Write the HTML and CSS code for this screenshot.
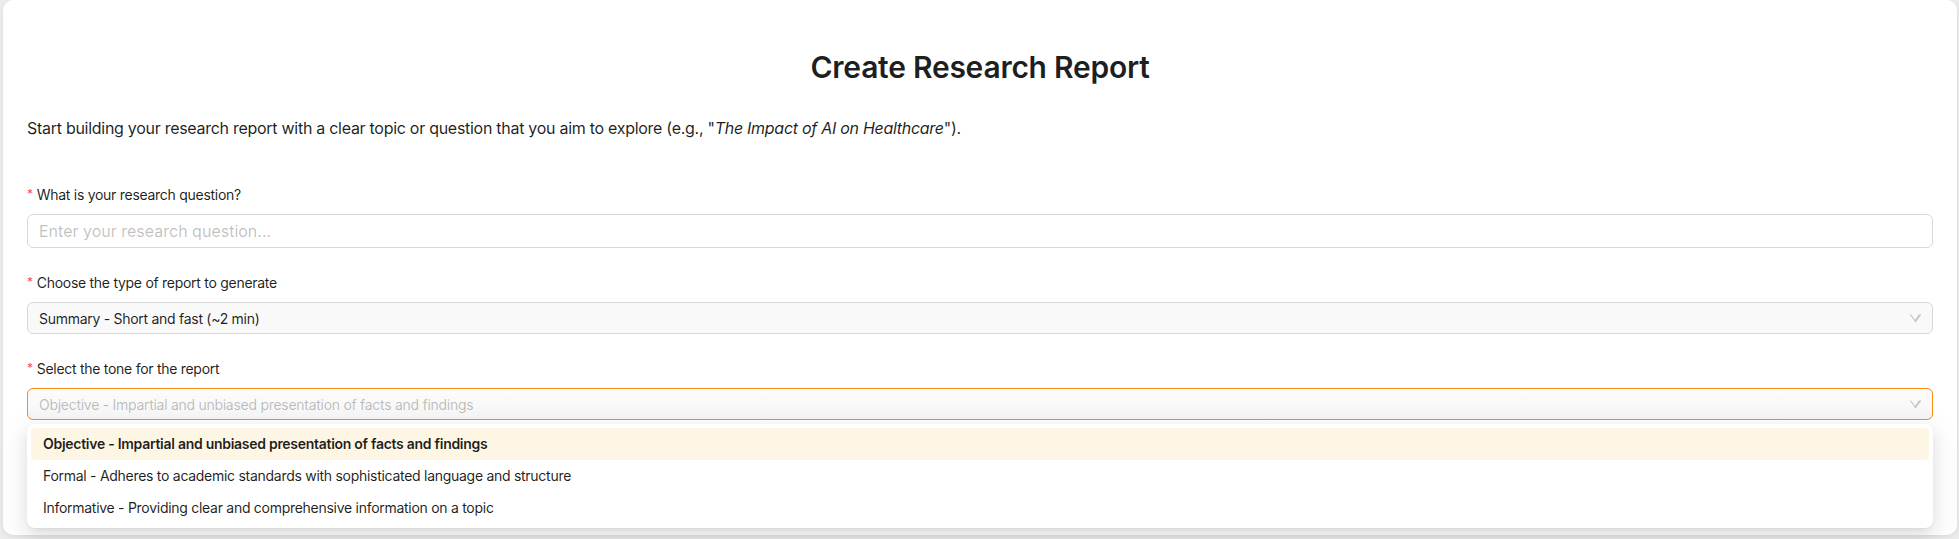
FILE: index.html
```html
<!DOCTYPE html>
<html lang="en">
<head>
<meta charset="utf-8">
<title>Create Research Report</title>
<link rel="stylesheet" href="styles.css">
</head>
<body>
<main class="card">
  <h2 class="title">Create Research Report</h2>
  <p class="intro">Start building your research report with a clear topic or question that you aim to explore (e.g., "<em>The Impact of AI on Healthcare</em>").</p>

  <form class="form">
    <div class="item">
      <label class="label"><span class="req">*</span>What is your research question?</label>
      <input class="input" type="text" placeholder="Enter your research question...">
    </div>

    <div class="item">
      <label class="label"><span class="req">*</span>Choose the type of report to generate</label>
      <div class="select">
        <span class="value">Summary - Short and fast (~2 min)</span>
        <svg class="arrow" viewBox="64 64 896 896" aria-hidden="true"><path d="M884 256h-75c-5.1 0-9.9 2.5-12.9 6.6L512 654.2 227.9 262.6c-3-4.1-7.8-6.6-12.9-6.6h-75c-6.5 0-10.3 7.4-6.5 12.1l392.2 540.2c12.6 17.4 38.9 17.4 51.4 0l392.2-540.2c3.9-4.7.1-12.1-6.4-12.1z"/></svg>
      </div>
    </div>

    <div class="item last">
      <label class="label"><span class="req">*</span>Select the tone for the report</label>
      <div class="select-wrap">
        <div class="select focused">
          <span class="value placeholder">Objective - Impartial and unbiased presentation of facts and findings</span>
          <svg class="arrow" viewBox="64 64 896 896" aria-hidden="true"><path d="M884 256h-75c-5.1 0-9.9 2.5-12.9 6.6L512 654.2 227.9 262.6c-3-4.1-7.8-6.6-12.9-6.6h-75c-6.5 0-10.3 7.4-6.5 12.1l392.2 540.2c12.6 17.4 38.9 17.4 51.4 0l392.2-540.2c3.9-4.7.1-12.1-6.4-12.1z"/></svg>
        </div>
        <ul class="dropdown">
          <li class="option active">Objective - Impartial and unbiased presentation of facts and findings</li>
          <li class="option">Formal - Adheres to academic standards with sophisticated language and structure</li>
          <li class="option">Informative - Providing clear and comprehensive information on a topic</li>
        </ul>
      </div>
    </div>
  </form>
</main>
</body>
</html>
```

FILE: styles.css
```css
* { box-sizing: border-box; }

html, body { height: 100%; }

body {
  margin: 0;
  padding: 0 2px 4px 3px;
  background: #ececec;
  font-family: Inter, "Noto Sans", "Liberation Sans", sans-serif;
  font-size: 14px;
  letter-spacing: -0.02em;
  color: rgba(0, 0, 0, 0.88);
  display: flex;
}

.card {
  flex: 1;
  background: #fff;
  border-radius: 10px;
  box-shadow: 0 1px 4px rgba(0, 0, 0, 0.08);
  padding: 47px 24px 24px;
}

.title {
  margin: 0;
  text-align: center;
  font-size: 30px;
  font-weight: 600;
  line-height: 40px;
  letter-spacing: -0.25px;
  color: rgba(0, 0, 0, 0.88);
}

.intro {
  margin: 29px 0 44px;
  line-height: 24px;
  font-size: 16px;
}

.form { margin: 0; }

.item { margin-bottom: 24px; }

.label {
  display: flex;
  align-items: center;
  height: 22px;
  line-height: 22px;
  margin-bottom: 8px;
}

.req {
  color: #ff4d4f;
  font-size: 12px;
  margin-right: 4px;
  line-height: 1;
  position: relative;
  top: -1px;
}

.input {
  display: block;
  width: 100%;
  height: 34px;
  padding: 4px 11px;
  border: 1px solid #d9d9d9;
  border-radius: 6px;
  font: inherit;
  font-size: 16px;
  letter-spacing: normal;
  color: rgba(0, 0, 0, 0.88);
  background: #fff;
  outline: none;
}

.input::placeholder { color: rgba(0, 0, 0, 0.25); }

.select-wrap { position: relative; }

.select {
  display: flex;
  align-items: center;
  height: 32px;
  padding: 0 11px;
  border: 1px solid #d9d9d9;
  border-radius: 6px;
  background: #f9f9f9;
}

.select.focused {
  border-color: #fa8c16;
  background: linear-gradient(#fcfcfc, #f6f6f6);
}

.value {
  flex: 1;
  white-space: nowrap;
  overflow: hidden;
}

.value.placeholder { color: rgba(0, 0, 0, 0.25); }

.arrow {
  width: 12px;
  height: 12px;
  fill: rgba(0, 0, 0, 0.22);
}

.dropdown {
  position: absolute;
  left: 0;
  right: 0;
  top: 36px;
  margin: 0;
  padding: 4px;
  list-style: none;
  background: #fff;
  border-radius: 8px;
  box-shadow: 0 6px 16px 0 rgba(0, 0, 0, 0.08), 0 3px 6px -4px rgba(0, 0, 0, 0.12), 0 9px 28px 8px rgba(0, 0, 0, 0.05);
  z-index: 10;
}

.option {
  height: 32px;
  line-height: 32px;
  padding: 0 12px;
  border-radius: 4px;
  white-space: nowrap;
}

.option.active {
  background: #fef6e5;
  font-weight: 600;
}
```
